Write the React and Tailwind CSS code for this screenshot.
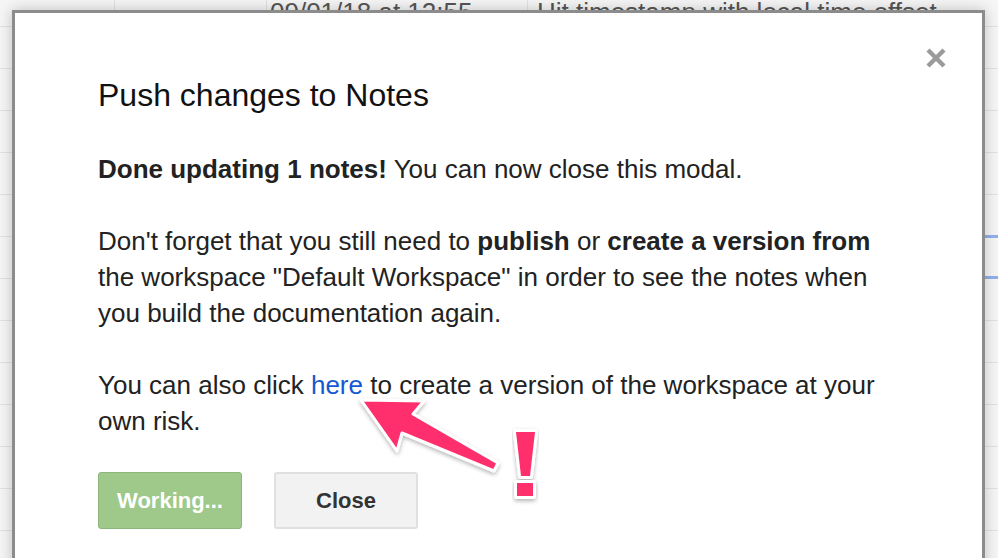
import React from "react";

const rows = Array.from({ length: 13 });

function Annotation() {
  // pink arrow + exclamation drawn over the modal
  return (
    <svg
      className="absolute left-0 top-0 pointer-events-none"
      width="998"
      height="558"
      viewBox="0 0 998 558"
    >
      <defs>
        <filter id="sh" x="-20%" y="-20%" width="140%" height="140%">
          <feDropShadow dx="0" dy="2" stdDeviation="2" floodColor="#000" floodOpacity="0.3" />
        </filter>
      </defs>
      <g filter="url(#sh)">
        <polygon
          points="361,400 424,401 413,414 498,463 494,471 402,433 397,451"
          fill="#ff2f6d"
          stroke="#fff"
          strokeWidth="3"
          strokeLinejoin="round"
        />
      </g>
      <g filter="url(#sh)">
        <polygon
          points="516,432 535,432 530,476 521,476"
          fill="#ff2f6d"
          stroke="#fff"
          strokeWidth="6"
          strokeLinejoin="round"
        />
        <rect x="517" y="483" width="16" height="13" fill="#ff2f6d" stroke="#fff" strokeWidth="6" strokeLinejoin="round" />
        <polygon points="516,432 535,432 530,476 521,476" fill="#ff2f6d" />
        <rect x="517" y="483" width="16" height="13" fill="#ff2f6d" />
      </g>
    </svg>
  );
}

export default function App() {
  return (
    <div
      className="relative w-[998px] h-[558px] overflow-hidden bg-[#f6f6f6]"
      style={{ fontFamily: '"Liberation Sans", Arial, sans-serif' }}
    >
      {/* table behind the modal */}
      <div className="flex flex-col">
        <div className="h-[27px] flex border-b border-[#e2e2e2] text-[26px] text-[#555] leading-none">
          <div className="w-[115px] border-r border-[#e2e2e2]" />
          <div className="w-[152px] border-r border-[#e2e2e2]" />
          <div className="w-[261px] border-r border-[#e2e2e2] pl-[3px] -mt-[1px]">09/01/18 at 12:55</div>
          <div className="flex-1 pl-[9px] -mt-[1px]">Hit timestamp with local time offset</div>
        </div>
        {rows.map((_, i) => (
          <div key={i} className="h-[42px] border-b border-[#e2e2e2] flex justify-end">
            {i === 5 && <div className="w-[60px] -mt-[2px] h-[44px] border-y-[3px] border-[#8fb1ec]" />}
          </div>
        ))}
      </div>

      {/* modal */}
      <div className="absolute left-[12px] top-[10px] w-[973px] h-[600px] bg-white border-[3px] border-[#8c8c8c] shadow-[0_0_14px_rgba(0,0,0,0.22)] pl-[83px] pr-[82px] pt-[64px] text-[#222]">
        <button className="absolute right-[34px] top-[33px] w-[24px] h-[24px] flex items-center justify-center">
          <svg width="22" height="22" viewBox="0 0 22 22">
            <path d="M3 3 L19 19 M19 3 L3 19" stroke="#9b9b9b" strokeWidth="4.5" strokeLinecap="butt" />
          </svg>
        </button>

        <h2 className="text-[32px] leading-[36px] text-[#111] font-normal">Push changes to Notes</h2>

        <div className="mt-[38px] text-[26px] leading-[36px]">
          <p>
            <b>Done updating 1 notes!</b> You can now close this modal.
          </p>
          <p className="mt-[36px]">
            Don't forget that you still need to <b>publish</b> or <b>create a version from</b> the
            workspace "Default Workspace" in order to see the notes when you build the documentation
            again.
          </p>
          <p className="mt-[36px]">
            You can also click <a className="text-[#1558d0]">here</a> to create a version of the
            workspace at your own risk.
          </p>
        </div>

        <div className="mt-[33px] flex gap-[32px]">
          <button className="w-[144px] h-[57px] rounded-[3px] bg-[#9ec98a] border border-[#8db67a] text-white font-bold text-[22px]">
            Working...
          </button>
          <button className="w-[144px] h-[57px] rounded-[3px] bg-[#f2f2f2] border-2 border-[#e0e0e0] text-[#333] font-bold text-[22px]">
            Close
          </button>
        </div>
      </div>

      <Annotation />
    </div>
  );
}
